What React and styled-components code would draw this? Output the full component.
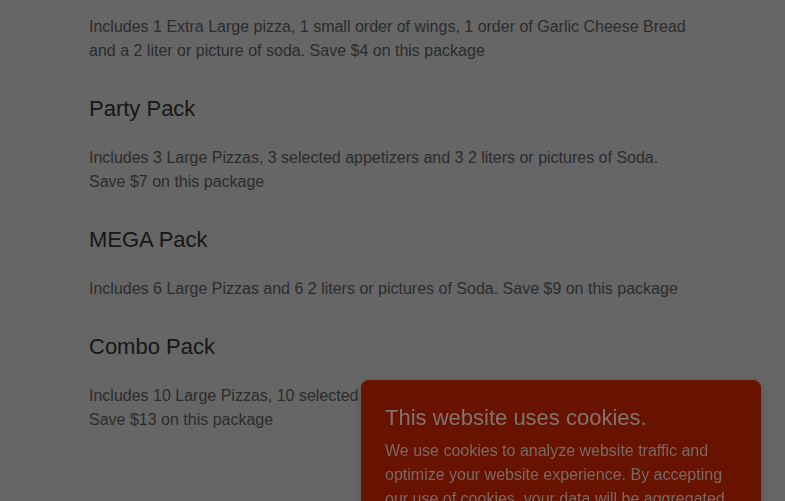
import styled, { createGlobalStyle } from "styled-components";

const GlobalStyle = createGlobalStyle`
  html, body {
    margin: 0;
    padding: 0;
    background-color: #666666;
    overflow: hidden;
  }
  body {
    font-family: "Liberation Sans", Arial, sans-serif;
  }
`;

const Page = styled.main`
  min-height: 100vh;
  padding: 15px 0 0 89px;
`;

const Packages = styled.section`
  width: 610px;
`;

const PackTitle = styled.h3`
  margin: 33px 0 24px;
  font-size: 22px;
  line-height: 26px;
  font-weight: 400;
  color: #161616;
`;

const PackText = styled.p`
  margin: 0;
  font-size: 16px;
  line-height: 24px;
  color: #2c2c2c;
`;

const CookieBanner = styled.aside`
  position: fixed;
  left: 361px;
  top: 380px;
  width: 400px;
  height: 200px;
  box-sizing: border-box;
  padding: 25px 24px 24px;
  background-color: #681200;
  border-radius: 8px;
  box-shadow: 0 2px 8px rgba(0, 0, 0, 0.15);
`;

const CookieTitle = styled.h4`
  margin: 0 0 8px;
  font-size: 22px;
  line-height: 26px;
  font-weight: 400;
  color: #807370;
`;

const CookieText = styled.p`
  margin: 0;
  font-size: 16px;
  line-height: 24px;
  color: #7a6a66;
`;

const packs = [
  {
    text: "Includes 1 Extra Large pizza, 1 small order of wings, 1 order of Garlic Cheese Bread and a 2 liter or picture of soda. Save $4 on this package",
  },
  {
    name: "Party Pack",
    text: "Includes 3 Large Pizzas, 3 selected appetizers and 3 2 liters or pictures of Soda. Save $7 on this package",
  },
  {
    name: "MEGA Pack",
    text: "Includes 6 Large Pizzas and 6 2 liters or pictures of Soda. Save $9 on this package",
  },
  {
    name: "Combo Pack",
    text: "Includes 10 Large Pizzas, 10 selected appetizers and 10 2 liters or pictures of Soda. Save $13 on this package",
  },
];

export default function App() {
  return (
    <>
      <GlobalStyle />
      <Page>
        <Packages>
          {packs.map((pack, i) => (
            <div key={i}>
              {pack.name && <PackTitle>{pack.name}</PackTitle>}
              <PackText>{pack.text}</PackText>
            </div>
          ))}
        </Packages>
      </Page>
      <CookieBanner>
        <CookieTitle>This website uses cookies.</CookieTitle>
        <CookieText>
          We use cookies to analyze website traffic and optimize your website
          experience. By accepting our use of cookies, your data will be
          aggregated with all other user data.
        </CookieText>
      </CookieBanner>
    </>
  );
}
